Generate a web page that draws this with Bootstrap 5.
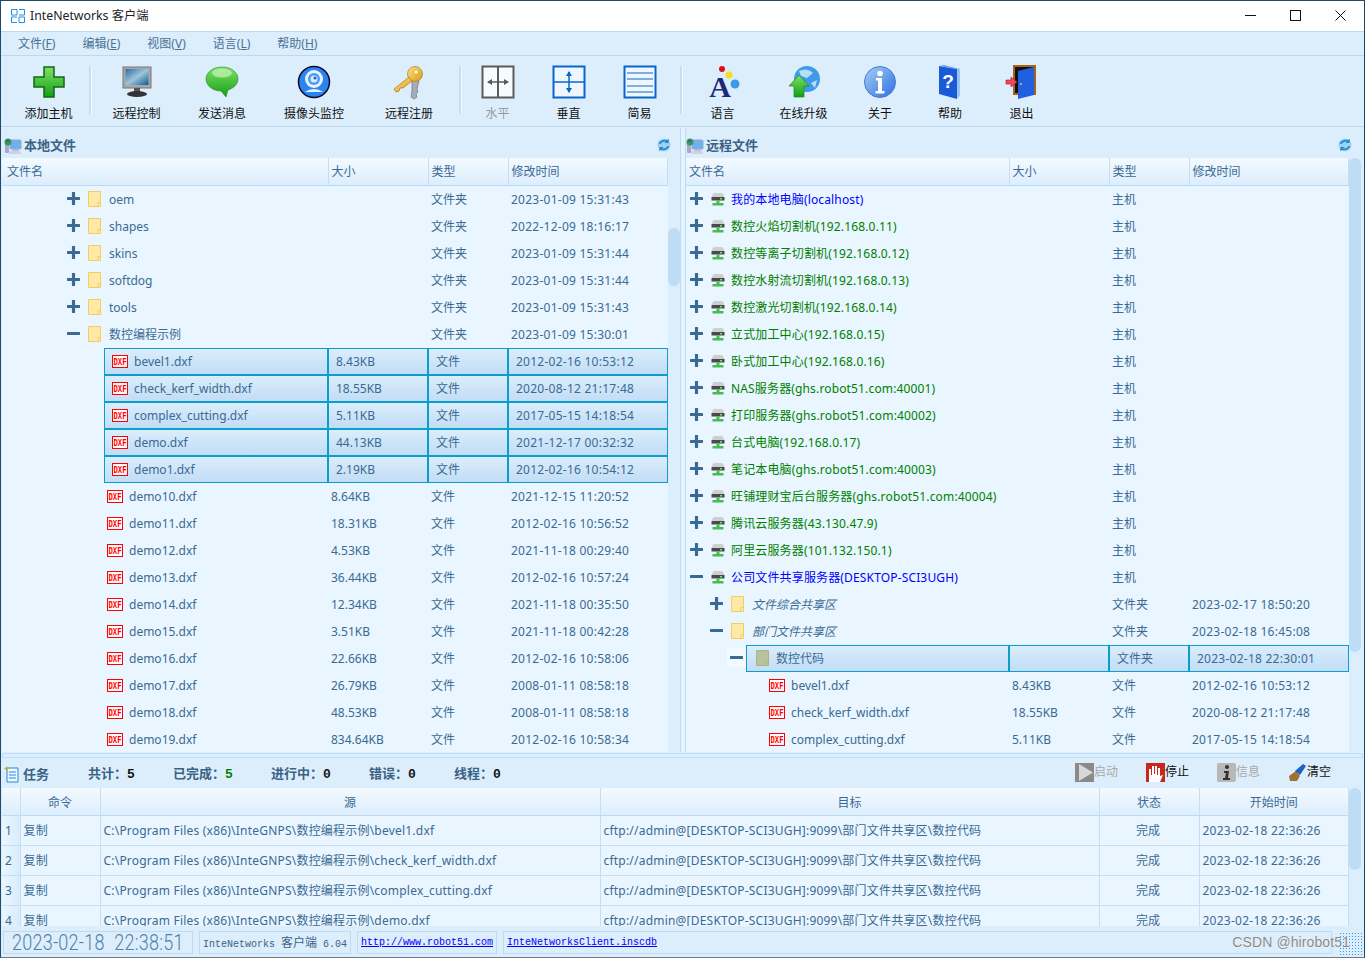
<!DOCTYPE html>
<html lang="zh-CN">
<head>
<meta charset="utf-8">
<title>InteNetworks 客户端</title>
<link href="https://cdn.jsdelivr.net/npm/bootstrap@5.3.0/dist/css/bootstrap.min.css" rel="stylesheet">
<style>
html,body{height:958px;overflow:hidden;background:#dceefc}
body{font-family:"Noto Sans","Noto Sans CJK SC",sans-serif;font-size:12px;color:#3a6a94;line-height:1.2}
.appwin{height:958px;border:1px solid #1b4a6b;border-bottom-color:#6d7b86;position:relative;overflow:hidden}
.titlebar{height:30px;background:#fff;color:#222;font-size:12.3px;flex:none}
.titlebar .win-ic{margin:0 5px 0 10px}
.winbtns{margin:0 0 1px auto;padding-right:1px}
.winbtns svg{display:block;margin:0 17px}
.menubar{height:25px;flex:none;background:#dceefc;border-top:1px solid #bcd9ef;border-bottom:1px solid #bcd9ef;padding:1px 0 0 17px;color:#4a7295;gap:27px}
.toolbar{height:71px;flex:none;border-bottom:1px solid #bcd9ef;padding-left:5px;color:#111}
.tool{padding-top:9px;text-align:center}
.tool svg{display:block;margin:0 auto 8px;width:34px;height:34px;overflow:visible}
.tool.off{color:#9a9a9a}
.shift1{padding-left:2px}
.tsep{width:2px;height:48px;margin-top:10px;background:#c9dff0;box-shadow:1px 0 0 #f2f9ff}
.ms7{margin-left:7px}.ms4{margin-left:4px}
.tw83{width:83px}.tw91{width:91px}.tw80{width:80px}.tw104{width:104px}.tw86{width:86px}.tw73{width:73px}.tw69{width:69px}.tw81{width:81px}.tw72{width:72px}.tw68{width:68px}.tw75{width:75px}
.upper{height:625px;flex:none}
.pane-l{width:679px;flex:none;padding-left:1px}
.pane-r{flex:1 1 auto;min-width:0}
.splitv{width:6px;flex:none;background:#e4f3ff;border-left:1px solid #b9dcf7;border-right:1px solid #b9dcf7;margin-top:1px}
.panehead{height:31px;flex:none;font-weight:700;color:#3a6285;font-size:13px;padding:7px 8px 0 2px;gap:2px;align-items:center}
.pane-r .panehead{padding:7px 11px 0 0}
.panehead .sync{margin:-3px 0 0 auto}
.panelist{flex:1 1 auto;min-height:0;overflow:hidden}
.pane-r .panelist{padding-right:3px}
.listview{flex:1 1 auto;overflow:hidden;background:#e9f6ff}
.sbar{width:12px;flex:none}
.sthumb{background:#bedcf3;border-radius:6px;width:12px}
.thumb-l{height:58px;margin-top:70px}
.thumb-r{height:494px;margin-top:0}
.thumb-t{height:82px}
.ftb.table{table-layout:fixed;margin:0;--bs-table-bg:transparent;color:inherit;width:100%;--bs-table-color:#3a6a94;border-color:transparent}
.ftb.table>:not(caption)>*>*{padding:2px 0 0 3px;border:0;height:27px;vertical-align:middle;white-space:nowrap;overflow:hidden;font-weight:400;color:#3a6a94;box-shadow:none}
.ftb.table>thead>tr>th{height:27px;padding-top:1px;background:linear-gradient(#f3faff,#dcedfc);border-right:1px solid #c3def5;border-bottom:1px solid #bcdcf5}
.ftb.table>thead>tr>th:first-child{padding-left:5px}
.pane-r .ftb.table>thead>tr>th:first-child{padding-left:3px}
.ftb.table>tbody>tr>td.cname{padding:0}
.ftb.table>tbody>tr>td:last-child{letter-spacing:.25px}
.c-l1{width:326px}.c-r1{width:323px}.c-s{width:100px}.c-t{width:80px}
.tree{display:flex;align-items:center;height:27px;padding-top:2px}
.tree>svg,.selbox>svg{margin-top:-2px}
.tree>svg.tg{margin-top:-4px}
.p65{padding-left:65px}.p105{padding-left:105px}.p4{padding-left:4px}.p24{padding-left:24px}.p44{padding-left:44px}.p83{padding-left:83px}
.tg{width:13px;height:13px;flex:none;margin-right:8px}
.tg-box{background:#f3faff;box-shadow:0 0 0 3px #f3faff;margin-right:3px}
.fd{width:13px;height:16px;flex:none;margin-right:8px}
.srv{width:14px;height:14px;flex:none;margin-right:6px}
.dx{width:16px;height:13px;flex:none;margin-right:6px}
.ftb.table>tbody>tr>td .host-b{color:#0000ff;letter-spacing:.15px}
.ftb.table>tbody>tr>td .host-g{color:#008000;letter-spacing:.15px}
.ital{font-style:italic}
.ftb.table>tbody>tr>td.sel{background:linear-gradient(#dceefc,#c0dcf5);box-shadow:inset 0 0 0 1px #0b9dcb;padding-left:8px}
.selbox{background:linear-gradient(#dceefc,#c0dcf5);box-shadow:inset 0 0 0 1px #0b9dcb}
.ml102{margin-left:102px;padding-left:8px}
.ml60{padding-left:10px;margin-top:-2px;height:27px}
.p44{padding-top:2px}
.ml60 .fd{margin-right:7px}
.splith{height:5px;flex:none;margin:1px 1px 0;background:#dceefc;border:1px solid #bde0ff}
.taskhead{height:30px;flex:none;font-weight:700;font-size:13px;color:#3a6285;padding:3px 0 0 3px}
.taskhead .num{font-family:"Liberation Mono",monospace;font-weight:700;font-size:13px;color:#111}
.taskhead .num.ok{color:#008000}
.tk-ti{width:84px}.tk1{width:85px}.tk2{width:98px}.tk3{width:98px}.tk4{width:85px}
.tk-act{margin:0 0 5px auto;padding-right:33px;font-weight:400;font-size:12px;gap:28px;color:#111}
.tk-act>span{display:flex;align-items:center;width:43px;white-space:nowrap}
.tk-act>span.dim{color:#a8a8a8}
.tk-act svg{width:19px;height:19px;flex:none}
.tasks{height:138px;flex:none;padding-left:1px}
.tk-gap{width:3px;flex:none}
.tasktb.table>:not(caption)>*>*{height:30px;padding:2px 0 0 3px;border-right:1px solid #c3def5;border-bottom:1px solid #c3def5;letter-spacing:.21px}
.tasktb.table>thead>tr>th{height:27px;text-align:center;padding:3px 0 0;letter-spacing:0}
.tasktb.table>thead>tr>th:first-child{padding:0}
.tasktb.table>tbody>tr>td.rowno{background:linear-gradient(90deg,#e9f6ff,#d8ebfb);padding-left:3px}
.tasktb.table>tbody>tr>td.ctr{text-align:center;padding:2px 2px 0 0;letter-spacing:0}
.c-n{width:18px}.c-c{width:80px}.c-a{width:500px}.c-b{width:499px}.c-d{width:100px}
.statusbar{height:31px;flex:none;padding:5px 0 3px 2px;gap:6px;background:#dceefc}
.stcell{background:#dceefc;border:1px solid #bcdcf5;height:23px;display:flex;align-items:center;padding:0 3px;font-family:"Liberation Mono","Noto Sans CJK SC",monospace;font-size:10px;color:#3a6285;white-space:nowrap;overflow:hidden}
.stcell a{color:#0000ff}
.st-clock{width:190px;padding-left:8px;font-family:Roboto,"Liberation Sans",sans-serif;font-weight:300;font-size:18px;color:#4f80a8}
.st-clock span{display:inline-block;transform:scaleY(1.2);word-spacing:5px;letter-spacing:.25px}
.st-app{width:152px}.st-url{width:140px}.st-file{width:829px}
.cjk-st{font-size:12px;font-family:"Noto Sans CJK SC",sans-serif}
.grip{position:absolute;right:0;bottom:2px;width:25px;height:23px;background-image:radial-gradient(circle,#2a9bf0 0.8px,transparent 1px);background-size:3px 3px}
.wmark{position:absolute;right:14px;bottom:6px;font-family:"Liberation Sans",sans-serif;font-size:14px;color:#8a8a8a;text-shadow:0 0 1px #fff;letter-spacing:.1px}
</style>
</head>
<body>
<svg width="0" height="0" class="d-block position-absolute">
<defs>
<symbol id="plus" viewBox="0 0 13 13"><path d="M1 6.500h11M6.500 1v11" stroke="#3a6a94" stroke-width="3.200" stroke-linecap="round"/></symbol>
<symbol id="minus" viewBox="0 0 13 13"><path d="M1 6.500h11" stroke="#3a6a94" stroke-width="3" stroke-linecap="round"/></symbol>
<symbol id="fold" viewBox="0 0 13 16"><path d="M.5.5h12v15H.5z" fill="#ffe9a6" stroke="#f1cd64"/><path d="M10 15.500v-4h2.500" fill="none" stroke="#f1cd64"/></symbol>
<symbol id="foldsel" viewBox="0 0 13 16"><path d="M.5.5h12v15H.5z" fill="#b5c3a0" stroke="#a9b77c"/><path d="M10 15.500v-4h2.500" fill="none" stroke="#a9b77c"/></symbol>
<symbol id="srv" viewBox="0 0 14 14"><path d="M1 5q0-4 3-4h6q3 0 3 4z" fill="#cfcfcf"/><rect x="0.500" y="5" width="13" height="3.500" fill="#4a4a4a"/><rect x="9" y="6" width="2" height="1.500" fill="#5df05d"/><path d="M5.500 8.500h3V11h4v2.500h-11V11h4z" fill="#45bb50"/></symbol>
<symbol id="dxf" viewBox="0 0 16 13"><rect x=".5" y=".5" width="15" height="12" fill="#fff" stroke="#f00"/><text x="8" y="10.300" text-anchor="middle" font-family="Liberation Mono" font-weight="700" font-size="11" fill="#f00" textLength="13" lengthAdjust="spacingAndGlyphs">DXF</text></symbol>
<symbol id="sync" viewBox="0 0 16 16"><circle cx="8" cy="8" r="6.500" fill="#9ed0f0"/><path d="M2.500 6.500Q5 2 11 3l2-1-.5 4h-4l1.500-1.500Q6 4 4.500 7zM13.500 9.500Q11 14 5 13l-2 1 .5-4h4L6 11.500q4 .5 5.500-2.500z" fill="#2588d0"/></symbol>
<symbol id="pcs" viewBox="0 0 18 17"><rect x="6" y="2" width="11" height="9" rx="1" fill="#6cb2f2" stroke="#9aa5c4"/><path d="M9 11h5l1 2H8z" fill="#b6bcd4"/><path d="M5 13h11l1.500 3H5z" fill="#d0d0e6"/><rect x="1" y="4" width="4" height="11" rx="1" fill="#a8a8cc"/><circle cx="4" cy="4" r="3.500" fill="#3d9a4a"/><path d="M1.500 3q2.500-3 4.500 0-2 2.500-4.500 0" fill="#2467c9"/></symbol>
<linearGradient id="gg" x1="0" y1="0" x2="0" y2="1"><stop offset="0" stop-color="#7fe06a"/><stop offset="1" stop-color="#12a012"/></linearGradient>
<linearGradient id="bl" x1="0" y1="0" x2="1" y2="1"><stop offset="0" stop-color="#a9cff8"/><stop offset="1" stop-color="#2c6ee0"/></linearGradient>
<linearGradient id="sc" x1="0" y1="0" x2="1" y2="1"><stop offset="0" stop-color="#2f6b9e"/><stop offset=".5" stop-color="#9cc6dc"/><stop offset="1" stop-color="#0f5b92"/></linearGradient>
<linearGradient id="gold" x1="0" y1="0" x2="1" y2="1"><stop offset="0" stop-color="#ffe680"/><stop offset="1" stop-color="#d79a1a"/></linearGradient>
</defs>
</svg>
<div class="appwin d-flex flex-column">
  <div class="titlebar d-flex align-items-center">
    <svg class="win-ic" width="14" height="14" viewBox="0 0 14 14"><path d="M6 .5H.5v5.500H6M8 .5h5.500v5.500H8M6 8H.5v5.500H6M8 8h5.500v5.500H8M6 .5v5.500M8 8v5.500" fill="none" stroke="#1e90e8"/></svg>
    InteNetworks 客户端
    <div class="winbtns d-flex align-items-center">
      <svg width="11" height="11" viewBox="0 0 11 11"><path d="M0 5.500h11" stroke="#111"/></svg>
      <svg width="11" height="11" viewBox="0 0 11 11"><rect x=".5" y=".5" width="10" height="10" fill="none" stroke="#111"/></svg>
      <svg width="11" height="11" viewBox="0 0 11 11"><path d="M.5.5l10 10M10.500.5l-10 10" stroke="#111"/></svg>
    </div>
  </div>
  <div class="menubar d-flex align-items-center">
    <span>文件(<u>F</u>)</span><span>编辑(<u>E</u>)</span><span>视图(<u>V</u>)</span><span>语言(<u>L</u>)</span><span>帮助(<u>H</u>)</span>
  </div>
  <div class="toolbar d-flex">
    <div class="tool tw83 shift1"><svg viewBox="0 0 34 34"><path d="M12 2h10v10h10v10H22v10H12V22H2V12h10z" fill="url(#gg)" stroke="#0d6a12" stroke-width="1.500"/></svg>添加主机</div>
    <div class="tsep"></div>
    <div class="tool tw91"><svg viewBox="0 0 34 34"><rect x="3" y="2" width="28" height="21" fill="#a8a8a8" stroke="#777"/><rect x="5.500" y="4" width="23" height="16" fill="url(#sc)"/><rect x="14" y="23" width="6" height="4" fill="#555"/><ellipse cx="17" cy="29" rx="10" ry="3" fill="#333"/></svg>远程控制</div>
    <div class="tool tw80"><svg viewBox="0 0 34 34"><path d="M17 2C7 2 1 8 1 14s6 12 15 12l5 6 2-7c6-2 10-6 10-11 0-7-7-12-16-12z" fill="url(#gg)" stroke="#2a8a2a" stroke-width=".6"/><ellipse cx="17" cy="8" rx="10" ry="4.500" fill="#c8f5b8" opacity=".7"/></svg>发送消息</div>
    <div class="tool tw104"><svg viewBox="0 0 34 34"><circle cx="17" cy="17" r="15.500" fill="#2c84f0" stroke="#0a0a28" stroke-width="1.500"/><circle cx="17" cy="14" r="9" fill="#e8f2ff"/><circle cx="17" cy="14" r="6" fill="#4a9af2"/><circle cx="17" cy="14" r="3.500" fill="#d9ecff"/><circle cx="18" cy="13" r="1.500" fill="#1a5fc0"/><path d="M8 27q9-6 18 0z" fill="#e8f2ff"/></svg>摄像头监控</div>
    <div class="tool tw86"><svg viewBox="0 0 34 34"><path d="M20 13l7 3-2 8 1 3-2 2 1 3-3 2-3-2 1-6z" fill="#a6adb6" stroke="#6b7480" stroke-width=".7"/><circle cx="23" cy="9" r="7.500" fill="url(#gold)" stroke="#b07a10" stroke-width=".7"/><path d="M17 12L2 24l2 3 3-1 1-3 3 0 9-7z" fill="url(#gold)" stroke="#b07a10" stroke-width=".7"/><circle cx="24" cy="7" r="2.500" fill="#fff2b8" stroke="#b07a10" stroke-width=".5"/></svg>远程注册</div>
    <div class="tsep ms7"></div>
    <div class="tool off tw73"><svg viewBox="0 0 34 34"><rect x="1.500" y="1.500" width="31" height="31" fill="#f6fbff" stroke="#5a5a5a" stroke-width="2"/><path d="M17 2v30" stroke="#5a5a5a" stroke-width="2"/><path d="M7 17h20" stroke="#5a5a5a" stroke-width="1.500"/><path d="M6 17l5-3v6zM28 17l-5-3v6z" fill="#5a5a5a"/></svg>水平</div>
    <div class="tool tw69"><svg viewBox="0 0 34 34"><rect x="1.500" y="1.500" width="31" height="31" fill="#eef7ff" stroke="#0a66cc" stroke-width="2"/><path d="M2 17h30" stroke="#0a66cc" stroke-width="1.500"/><path d="M17 7v20" stroke="#0a66cc" stroke-width="1.500"/><path d="M17 6l-3 5h6zM17 28l-3-5h6z" fill="#0a66cc"/></svg>垂直</div>
    <div class="tool tw73"><svg viewBox="0 0 34 34"><rect x="1.500" y="1.500" width="31" height="31" fill="#eef7ff" stroke="#0a66cc" stroke-width="2"/><path d="M4 8h26M4 14h26M4 21h26M4 27h26" stroke="#0a66cc" stroke-width="1.200"/></svg>简易</div>
    <div class="tsep ms4"></div>
    <div class="tool tw81"><svg viewBox="0 0 34 34"><text x="14" y="32" text-anchor="middle" font-family="Liberation Serif" font-weight="700" font-size="30" fill="#1c2a7a">A</text><circle cx="16" cy="4" r="3" fill="#e01010"/><circle cx="23" cy="10" r="3.500" fill="#f2e020"/><circle cx="29" cy="19" r="4.500" fill="#3a9ae8"/></svg>语言</div>
    <div class="tool tw81"><svg viewBox="0 0 34 34"><circle cx="20" cy="14" r="13" fill="#3f9be8"/><path d="M12 6q8-4 14 2l-6 5-6-2zM24 18l6-3-2 8z" fill="#b6def5"/><path d="M12 10L2 21h5v11h10V21h5z" fill="url(#gg)" stroke="#1a8a1a" stroke-width=".7"/></svg>在线升级</div>
    <div class="tool tw72"><svg viewBox="0 0 34 34"><circle cx="17" cy="17" r="15.500" fill="url(#bl)" stroke="#4a7ad0"/><circle cx="17" cy="8.500" r="2.800" fill="#fff"/><path d="M13 13h6v13h2.500v2.500h-9V26H15V15.500h-2z" fill="#fff"/></svg>关于</div>
    <div class="tool tw68"><svg viewBox="0 0 34 34"><path d="M6 1l18 3v30L6 29z" fill="#1a5ad8"/><path d="M24 4h3v26l-3 4z" fill="#9cc4f0"/><path d="M6 1l5-1 16 4h-3z" fill="#6da2ea"/><text x="15" y="23" text-anchor="middle" font-family="Liberation Sans" font-weight="700" font-size="19" fill="#fff">?</text></svg>帮助</div>
    <div class="tool tw75"><svg viewBox="0 0 34 34"><path d="M9 1h21v28H9z" fill="#111" stroke="#a8621c" stroke-width="2"/><path d="M13 6l16-4v28l-16 4z" fill="#1f5fe0"/><circle cx="16" cy="19" r="1" fill="#ffc040"/><path d="M1 15h5v-3l6 5-6 5v-3H1z" fill="#f4465a" stroke="#a81a20" stroke-width=".6"/></svg>退出</div>
  </div>
  <div class="upper d-flex">
    <div class="pane-l d-flex flex-column">
      <div class="panehead d-flex"><svg width="18" height="17"><use href="#pcs"/></svg>本地文件<svg class="sync" width="16" height="16"><use href="#sync"/></svg></div>
      <div class="panelist d-flex">
        <div class="listview">
          <table class="table ftb">
            <colgroup><col class="c-l1"><col class="c-s"><col class="c-t"><col></colgroup>
            <thead><tr><th>文件名</th><th>大小</th><th>类型</th><th>修改时间</th></tr></thead>
            <tbody>
            <tr><td class="cname"><div class="tree p65"><svg class="tg"><use href="#plus"/></svg><svg class="fd"><use href="#fold"/></svg>oem</div></td><td></td><td>文件夹</td><td>2023-01-09 15:31:43</td></tr>
            <tr><td class="cname"><div class="tree p65"><svg class="tg"><use href="#plus"/></svg><svg class="fd"><use href="#fold"/></svg>shapes</div></td><td></td><td>文件夹</td><td>2022-12-09 18:16:17</td></tr>
            <tr><td class="cname"><div class="tree p65"><svg class="tg"><use href="#plus"/></svg><svg class="fd"><use href="#fold"/></svg>skins</div></td><td></td><td>文件夹</td><td>2023-01-09 15:31:44</td></tr>
            <tr><td class="cname"><div class="tree p65"><svg class="tg"><use href="#plus"/></svg><svg class="fd"><use href="#fold"/></svg>softdog</div></td><td></td><td>文件夹</td><td>2023-01-09 15:31:44</td></tr>
            <tr><td class="cname"><div class="tree p65"><svg class="tg"><use href="#plus"/></svg><svg class="fd"><use href="#fold"/></svg>tools</div></td><td></td><td>文件夹</td><td>2023-01-09 15:31:43</td></tr>
            <tr><td class="cname"><div class="tree p65"><svg class="tg"><use href="#minus"/></svg><svg class="fd"><use href="#fold"/></svg>数控编程示例</div></td><td></td><td>文件夹</td><td>2023-01-09 15:30:01</td></tr>
            <tr><td class="cname"><div class="tree selbox ml102"><svg class="dx"><use href="#dxf"/></svg>bevel1.dxf</div></td><td class="sel">8.43KB</td><td class="sel">文件</td><td class="sel">2012-02-16 10:53:12</td></tr>
            <tr><td class="cname"><div class="tree selbox ml102"><svg class="dx"><use href="#dxf"/></svg>check_kerf_width.dxf</div></td><td class="sel">18.55KB</td><td class="sel">文件</td><td class="sel">2020-08-12 21:17:48</td></tr>
            <tr><td class="cname"><div class="tree selbox ml102"><svg class="dx"><use href="#dxf"/></svg>complex_cutting.dxf</div></td><td class="sel">5.11KB</td><td class="sel">文件</td><td class="sel">2017-05-15 14:18:54</td></tr>
            <tr><td class="cname"><div class="tree selbox ml102"><svg class="dx"><use href="#dxf"/></svg>demo.dxf</div></td><td class="sel">44.13KB</td><td class="sel">文件</td><td class="sel">2021-12-17 00:32:32</td></tr>
            <tr><td class="cname"><div class="tree selbox ml102"><svg class="dx"><use href="#dxf"/></svg>demo1.dxf</div></td><td class="sel">2.19KB</td><td class="sel">文件</td><td class="sel">2012-02-16 10:54:12</td></tr>
            <tr><td class="cname"><div class="tree p105"><svg class="dx"><use href="#dxf"/></svg>demo10.dxf</div></td><td>8.64KB</td><td>文件</td><td>2021-12-15 11:20:52</td></tr>
            <tr><td class="cname"><div class="tree p105"><svg class="dx"><use href="#dxf"/></svg>demo11.dxf</div></td><td>18.31KB</td><td>文件</td><td>2012-02-16 10:56:52</td></tr>
            <tr><td class="cname"><div class="tree p105"><svg class="dx"><use href="#dxf"/></svg>demo12.dxf</div></td><td>4.53KB</td><td>文件</td><td>2021-11-18 00:29:40</td></tr>
            <tr><td class="cname"><div class="tree p105"><svg class="dx"><use href="#dxf"/></svg>demo13.dxf</div></td><td>36.44KB</td><td>文件</td><td>2012-02-16 10:57:24</td></tr>
            <tr><td class="cname"><div class="tree p105"><svg class="dx"><use href="#dxf"/></svg>demo14.dxf</div></td><td>12.34KB</td><td>文件</td><td>2021-11-18 00:35:50</td></tr>
            <tr><td class="cname"><div class="tree p105"><svg class="dx"><use href="#dxf"/></svg>demo15.dxf</div></td><td>3.51KB</td><td>文件</td><td>2021-11-18 00:42:28</td></tr>
            <tr><td class="cname"><div class="tree p105"><svg class="dx"><use href="#dxf"/></svg>demo16.dxf</div></td><td>22.66KB</td><td>文件</td><td>2012-02-16 10:58:06</td></tr>
            <tr><td class="cname"><div class="tree p105"><svg class="dx"><use href="#dxf"/></svg>demo17.dxf</div></td><td>26.79KB</td><td>文件</td><td>2008-01-11 08:58:18</td></tr>
            <tr><td class="cname"><div class="tree p105"><svg class="dx"><use href="#dxf"/></svg>demo18.dxf</div></td><td>48.53KB</td><td>文件</td><td>2008-01-11 08:58:18</td></tr>
            <tr><td class="cname"><div class="tree p105"><svg class="dx"><use href="#dxf"/></svg>demo19.dxf</div></td><td>834.64KB</td><td>文件</td><td>2012-02-16 10:58:34</td></tr>
            </tbody>
          </table>
        </div>
        <div class="sbar"><div class="sthumb thumb-l"></div></div>
      </div>
    </div>
    <div class="splitv"></div>
    <div class="pane-r d-flex flex-column">
      <div class="panehead d-flex"><svg width="18" height="17"><use href="#pcs"/></svg>远程文件<svg class="sync" width="16" height="16"><use href="#sync"/></svg></div>
      <div class="panelist d-flex">
        <div class="listview">
          <table class="table ftb">
            <colgroup><col class="c-r1"><col class="c-s"><col class="c-t"><col></colgroup>
            <thead><tr><th>文件名</th><th>大小</th><th>类型</th><th>修改时间</th></tr></thead>
            <tbody>
            <tr><td class="cname"><div class="tree p4 host-b"><svg class="tg"><use href="#plus"/></svg><svg class="srv"><use href="#srv"/></svg>我的本地电脑(localhost)</div></td><td></td><td>主机</td><td></td></tr>
            <tr><td class="cname"><div class="tree p4 host-g"><svg class="tg"><use href="#plus"/></svg><svg class="srv"><use href="#srv"/></svg>数控火焰切割机(192.168.0.11)</div></td><td></td><td>主机</td><td></td></tr>
            <tr><td class="cname"><div class="tree p4 host-g"><svg class="tg"><use href="#plus"/></svg><svg class="srv"><use href="#srv"/></svg>数控等离子切割机(192.168.0.12)</div></td><td></td><td>主机</td><td></td></tr>
            <tr><td class="cname"><div class="tree p4 host-g"><svg class="tg"><use href="#plus"/></svg><svg class="srv"><use href="#srv"/></svg>数控水射流切割机(192.168.0.13)</div></td><td></td><td>主机</td><td></td></tr>
            <tr><td class="cname"><div class="tree p4 host-g"><svg class="tg"><use href="#plus"/></svg><svg class="srv"><use href="#srv"/></svg>数控激光切割机(192.168.0.14)</div></td><td></td><td>主机</td><td></td></tr>
            <tr><td class="cname"><div class="tree p4 host-g"><svg class="tg"><use href="#plus"/></svg><svg class="srv"><use href="#srv"/></svg>立式加工中心(192.168.0.15)</div></td><td></td><td>主机</td><td></td></tr>
            <tr><td class="cname"><div class="tree p4 host-g"><svg class="tg"><use href="#plus"/></svg><svg class="srv"><use href="#srv"/></svg>卧式加工中心(192.168.0.16)</div></td><td></td><td>主机</td><td></td></tr>
            <tr><td class="cname"><div class="tree p4 host-g"><svg class="tg"><use href="#plus"/></svg><svg class="srv"><use href="#srv"/></svg>NAS服务器(ghs.robot51.com:40001)</div></td><td></td><td>主机</td><td></td></tr>
            <tr><td class="cname"><div class="tree p4 host-g"><svg class="tg"><use href="#plus"/></svg><svg class="srv"><use href="#srv"/></svg>打印服务器(ghs.robot51.com:40002)</div></td><td></td><td>主机</td><td></td></tr>
            <tr><td class="cname"><div class="tree p4 host-g"><svg class="tg"><use href="#plus"/></svg><svg class="srv"><use href="#srv"/></svg>台式电脑(192.168.0.17)</div></td><td></td><td>主机</td><td></td></tr>
            <tr><td class="cname"><div class="tree p4 host-g"><svg class="tg"><use href="#plus"/></svg><svg class="srv"><use href="#srv"/></svg>笔记本电脑(ghs.robot51.com:40003)</div></td><td></td><td>主机</td><td></td></tr>
            <tr><td class="cname"><div class="tree p4 host-g"><svg class="tg"><use href="#plus"/></svg><svg class="srv"><use href="#srv"/></svg>旺铺理财宝后台服务器(ghs.robot51.com:40004)</div></td><td></td><td>主机</td><td></td></tr>
            <tr><td class="cname"><div class="tree p4 host-g"><svg class="tg"><use href="#plus"/></svg><svg class="srv"><use href="#srv"/></svg>腾讯云服务器(43.130.47.9)</div></td><td></td><td>主机</td><td></td></tr>
            <tr><td class="cname"><div class="tree p4 host-g"><svg class="tg"><use href="#plus"/></svg><svg class="srv"><use href="#srv"/></svg>阿里云服务器(101.132.150.1)</div></td><td></td><td>主机</td><td></td></tr>
            <tr><td class="cname"><div class="tree p4 host-b"><svg class="tg"><use href="#minus"/></svg><svg class="srv"><use href="#srv"/></svg>公司文件共享服务器(DESKTOP-SCI3UGH)</div></td><td></td><td>主机</td><td></td></tr>
            <tr><td class="cname"><div class="tree p24 ital"><svg class="tg"><use href="#plus"/></svg><svg class="fd"><use href="#fold"/></svg>文件综合共享区</div></td><td></td><td>文件夹</td><td>2023-02-17 18:50:20</td></tr>
            <tr><td class="cname"><div class="tree p24 ital"><svg class="tg"><use href="#minus"/></svg><svg class="fd"><use href="#fold"/></svg>部门文件共享区</div></td><td></td><td>文件夹</td><td>2023-02-18 16:45:08</td></tr>
            <tr><td class="cname"><div class="tree p44"><svg class="tg tg-box"><use href="#minus"/></svg><div class="tree selbox ml60 flex-fill"><svg class="fd"><use href="#foldsel"/></svg>数控代码</div></div></td><td class="sel"></td><td class="sel">文件夹</td><td class="sel">2023-02-18 22:30:01</td></tr>
            <tr><td class="cname"><div class="tree p83"><svg class="dx"><use href="#dxf"/></svg>bevel1.dxf</div></td><td>8.43KB</td><td>文件</td><td>2012-02-16 10:53:12</td></tr>
            <tr><td class="cname"><div class="tree p83"><svg class="dx"><use href="#dxf"/></svg>check_kerf_width.dxf</div></td><td>18.55KB</td><td>文件</td><td>2020-08-12 21:17:48</td></tr>
            <tr><td class="cname"><div class="tree p83"><svg class="dx"><use href="#dxf"/></svg>complex_cutting.dxf</div></td><td>5.11KB</td><td>文件</td><td>2017-05-15 14:18:54</td></tr>
            </tbody>
          </table>
        </div>
        <div class="sbar"><div class="sthumb thumb-r"></div></div>
      </div>
    </div>
  </div>
  <div class="splith"></div>
  <div class="taskhead d-flex align-items-center">
    <span class="tk-ti d-flex align-items-center gap-1"><svg width="15" height="17" viewBox="0 0 15 17"><path d="M3 2h11v14H3z" fill="#eef7ff" stroke="#1e8ad8"/><path d="M5 6h7M5 9h7M5 12h7" stroke="#1e8ad8"/><path d="M2.500 0l.8 1.700 1.700.8-1.700.8-.8 1.700-.8-1.700L0 2.500l1.700-.8z" fill="#e0a010"/></svg>任务</span>
    <span class="tk1">共计：<span class="num">5</span></span>
    <span class="tk2">已完成：<span class="num ok">5</span></span>
    <span class="tk3">进行中：<span class="num">0</span></span>
    <span class="tk4">错误：<span class="num">0</span></span>
    <span>线程：<span class="num">0</span></span>
    <div class="tk-act d-flex">
      <span class="dim"><svg viewBox="0 0 19 19"><rect width="19" height="19" fill="#8a8a8a"/><path d="M4 1l14 8.500L4 18z" fill="#d8d8d8"/></svg>启动</span>
      <span><svg viewBox="0 0 19 19"><rect width="19" height="19" fill="#c8281c"/><path d="M3 19V6h2v6h1V3h2v8h1V3h2v9h1V5h2v8l3-1-3 7z" fill="#fff"/></svg>停止</span>
      <span class="dim"><svg viewBox="0 0 19 19"><rect width="19" height="19" rx="2" fill="#b8b8b8"/><circle cx="10" cy="4" r="2" fill="#333"/><path d="M7 8h5l-1 7h2v2H6v-2h2l1-5H7z" fill="#333"/></svg>信息</span>
      <span><svg viewBox="0 0 19 19"><path d="M1 13l7-5 4 5-3 5H2z" fill="#a07030"/><path d="M7 8l8-7 3 2-6 9z" fill="#2060c0"/></svg>清空</span>
    </div>
  </div>
  <div class="tasks d-flex">
    <div class="listview">
      <table class="table ftb tasktb">
        <colgroup><col class="c-n"><col class="c-c"><col class="c-a"><col class="c-b"><col class="c-d"><col></colgroup>
        <thead><tr><th></th><th>命令</th><th>源</th><th>目标</th><th>状态</th><th>开始时间</th></tr></thead>
        <tbody>
        <tr><td class="rowno">1</td><td>复制</td><td>C:\Program Files (x86)\InteGNPS\数控编程示例\bevel1.dxf</td><td>cftp://admin@[DESKTOP-SCI3UGH]:9099\部门文件共享区\数控代码</td><td class="ctr">完成</td><td>2023-02-18 22:36:26</td></tr>
        <tr><td class="rowno">2</td><td>复制</td><td>C:\Program Files (x86)\InteGNPS\数控编程示例\check_kerf_width.dxf</td><td>cftp://admin@[DESKTOP-SCI3UGH]:9099\部门文件共享区\数控代码</td><td class="ctr">完成</td><td>2023-02-18 22:36:26</td></tr>
        <tr><td class="rowno">3</td><td>复制</td><td>C:\Program Files (x86)\InteGNPS\数控编程示例\complex_cutting.dxf</td><td>cftp://admin@[DESKTOP-SCI3UGH]:9099\部门文件共享区\数控代码</td><td class="ctr">完成</td><td>2023-02-18 22:36:26</td></tr>
        <tr><td class="rowno">4</td><td>复制</td><td>C:\Program Files (x86)\InteGNPS\数控编程示例\demo.dxf</td><td>cftp://admin@[DESKTOP-SCI3UGH]:9099\部门文件共享区\数控代码</td><td class="ctr">完成</td><td>2023-02-18 22:36:26</td></tr>
        </tbody>
      </table>
    </div>
    <div class="sbar"><div class="sthumb thumb-t"></div></div>
    <div class="tk-gap"></div>
  </div>
  <div class="statusbar d-flex">
    <div class="stcell st-clock"><span>2023-02-18 22:38:51</span></div>
    <div class="stcell st-app"><span>InteNetworks <span class="cjk-st">客户端</span> 6.04</span></div>
    <div class="stcell st-url"><a href="#">http://www.robot51.com</a></div>
    <div class="stcell st-file"><a href="#">InteNetworksClient.inscdb</a></div>
  </div>
  <div class="grip"></div>
  <div class="wmark">CSDN @hirobot51</div>
</div>
</body>
</html>
